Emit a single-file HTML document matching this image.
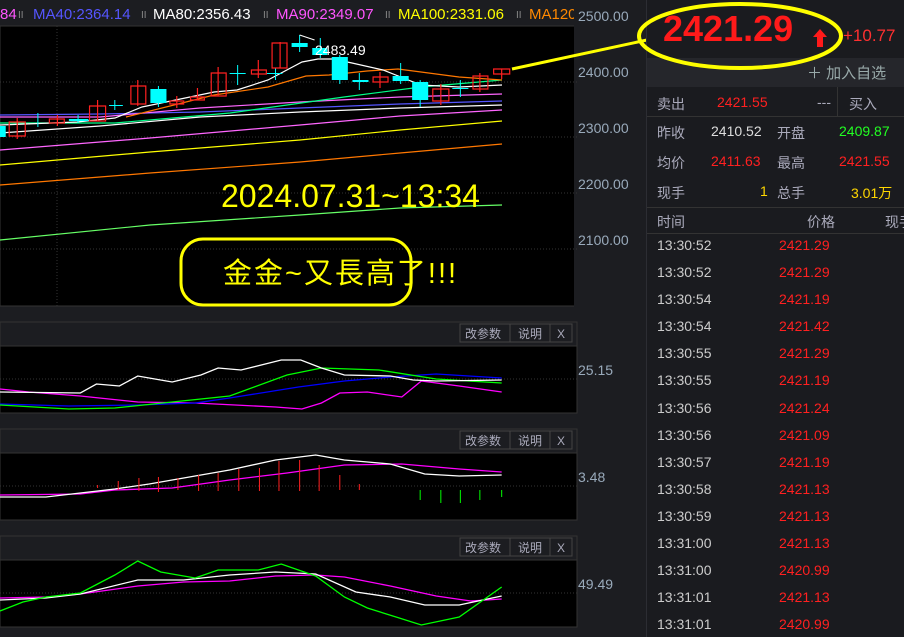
<!DOCTYPE html><html><head><meta charset="utf-8"><style>
body{margin:0;width:904px;height:637px;overflow:hidden;background:#1c1d21;font-family:"Liberation Sans","Noto Sans CJK SC",sans-serif;position:relative}
.a{position:absolute;white-space:nowrap}
.rp{left:646px;top:0;width:258px;height:637px;background:#1a1b1f;border-left:1px solid #2c2d33;overflow:hidden}
.t{font-size:14px;color:#aab}
.s *{vector-effect:non-scaling-stroke}
</style></head><body>
<svg class="a" style="left:0;top:0" width="646" height="637" font-family="Liberation Sans,Noto Sans CJK SC,sans-serif">
<rect x="0" y="0" width="646" height="637" fill="#1c1d21"/>
<rect x="0" y="26" width="577" height="280" fill="#000" stroke="#333" />
<g font-size="15">
<text x="0" y="19" fill="#ff55ff">84</text><text x="18" y="18" fill="#888" font-size="10">II</text>
<text x="33" y="19" fill="#5555ff">MA40:2364.14</text><text x="141" y="18" fill="#888" font-size="10">II</text>
<text x="153" y="19" fill="#fff">MA80:2356.43</text><text x="263" y="18" fill="#888" font-size="10">II</text>
<text x="276" y="19" fill="#ff55ff">MA90:2349.07</text><text x="385" y="18" fill="#888" font-size="10">II</text>
<text x="398" y="19" fill="#ffff00">MA100:2331.06</text><text x="516" y="18" fill="#888" font-size="10">II</text>
<text x="529" y="19" fill="#ff8800">MA120</text>
</g>
<rect x="574" y="0" width="72" height="637" fill="#1c1d21"/>
<g font-size="14" fill="#9ab">
<text x="578" y="21">2500.00</text><text x="578" y="77">2400.00</text><text x="578" y="133">2300.00</text><text x="578" y="189">2200.00</text><text x="578" y="245">2100.00</text>
<text x="578" y="375">25.15</text><text x="578" y="482">3.48</text><text x="578" y="589">49.49</text>
</g>
<g stroke="#333" stroke-dasharray="1,2"><line x1="0" y1="82" x2="577" y2="82"/><line x1="0" y1="137" x2="577" y2="137"/><line x1="0" y1="193" x2="577" y2="193"/><line x1="0" y1="249" x2="577" y2="249"/><line x1="57" y1="26" x2="57" y2="306"/></g>
<g fill="none" stroke-width="1.2">
<polyline stroke="#66ff66" points="0,240 150,225 300,215 400,208 502,205"/>
<polyline stroke="#ff7700" points="0,185 150,173 300,162 400,153 502,144"/>
<polyline stroke="#ffff00" points="0,165 150,152 300,140 400,130 502,121"/>
<polyline stroke="#ff66ff" points="0,150 150,138 300,125 400,116 502,110"/>
<polyline stroke="#fff" points="0,133 100,126 200,117 300,112 400,108 502,105"/>
<polyline stroke="#5555ff" points="0,115 100,114 200,112 300,108 400,104 502,101"/>
<polyline stroke="#ff66ff" points="0,117 100,117 200,108 300,102 400,97 502,94"/>
<polyline stroke="#00ff88" points="0,123 115,123 230,113 344,97 421,87 502,80"/>
<polyline stroke="#ff7700" points="126,117 214,95 268,87 306,76 329,75 367,71 398,69 421,72 459,77 502,80"/>
<polyline stroke="#fff" points="0,125 77,122 115,118 142,107 214,92 237,90 268,80 302,62 318,59 333,59 352,63 383,70 421,85 459,87 502,85"/>
</g>
<g class="s" transform="scale(1.148,1)">
<g stroke="#00ffff" stroke-width="1">
<line x1="33" y1="113" x2="33" y2="127"/><line x1="68" y1="115" x2="68" y2="123"/><line x1="100" y1="100" x2="100" y2="110"/><line x1="138" y1="86" x2="138" y2="107"/><line x1="207" y1="65" x2="207" y2="85"/><line x1="240" y1="68" x2="240" y2="80"/><line x1="261" y1="35" x2="261" y2="52"/><line x1="279" y1="38" x2="279" y2="58"/><line x1="296" y1="55" x2="296" y2="84"/><line x1="313" y1="73" x2="313" y2="90"/><line x1="349" y1="63" x2="349" y2="84"/><line x1="366" y1="80" x2="366" y2="107"/><line x1="401" y1="80" x2="401" y2="97"/>
</g>
<g fill="#00ffff">
<rect x="0" y="126" width="5" height="11"/><rect x="60" y="119" width="17" height="2"/><rect x="95" y="105" width="12" height="1"/><rect x="131" y="89" width="14" height="14"/><rect x="200" y="73" width="14" height="1"/><rect x="232" y="73" width="14" height="1"/><rect x="254" y="43" width="14" height="4"/><rect x="272" y="48" width="13" height="7"/><rect x="289" y="57" width="14" height="23"/><rect x="307" y="80" width="14" height="2"/><rect x="342" y="76" width="14" height="5"/><rect x="359" y="82" width="14" height="18"/><rect x="394" y="88" width="14" height="1"/>
</g>
<g stroke="#ff2020" fill="none" stroke-width="1.2">
<line x1="15" y1="118" x2="15" y2="139"/><line x1="50" y1="115" x2="50" y2="126"/><line x1="85" y1="100" x2="85" y2="121"/><line x1="120" y1="80" x2="120" y2="106"/><line x1="154" y1="96" x2="154" y2="108"/><line x1="172" y1="88" x2="172" y2="100"/><line x1="190" y1="67" x2="190" y2="96"/><line x1="225" y1="60" x2="225" y2="78"/><line x1="244" y1="42" x2="244" y2="68"/><line x1="331" y1="72" x2="331" y2="88"/><line x1="384" y1="84" x2="384" y2="105"/><line x1="418" y1="73" x2="418" y2="92"/><line x1="437" y1="69" x2="437" y2="79"/>
<rect x="8" y="122" width="14" height="14"/><rect x="43" y="119" width="13" height="4"/><rect x="78" y="106" width="14" height="15"/><rect x="114" y="86" width="13" height="18"/><rect x="148" y="101" width="12" height="3"/><rect x="166" y="97" width="12" height="3"/><rect x="184" y="73" width="13" height="23"/><rect x="219" y="70" width="13" height="4"/><rect x="237" y="43" width="13" height="25"/><rect x="325" y="77" width="13" height="5"/><rect x="377" y="89" width="14" height="12"/><rect x="412" y="76" width="13" height="13"/><rect x="430" y="69" width="14" height="5"/>
</g>
<polyline points="261,35 274,40" stroke="#fff" fill="none"/>
</g>
<text x="315" y="55" fill="#fff" font-size="14">2483.49</text>
<line x1="512" y1="69" x2="647" y2="40" stroke="#ffff00" stroke-width="3"/>
<text x="221" y="207" fill="#ffff00" font-size="32">2024.07.31~13:34</text>
<rect x="181" y="239" width="230" height="66" rx="22" fill="none" stroke="#ffff00" stroke-width="3"/>
<text x="223" y="283" fill="#ffff00" font-size="29" letter-spacing="2">金金~又長高了!!!</text>
<g>
<rect x="0" y="322" width="577" height="24" fill="#1c1d21" stroke="#333"/><rect x="0" y="346" width="577" height="67" fill="#000" stroke="#333"/>
<rect x="0" y="429" width="577" height="24" fill="#1c1d21" stroke="#333"/><rect x="0" y="453" width="577" height="67" fill="#000" stroke="#333"/>
<rect x="0" y="536" width="577" height="24" fill="#1c1d21" stroke="#333"/><rect x="0" y="560" width="577" height="67" fill="#000" stroke="#333"/>
</g>
<g font-size="12" fill="#aab">
<g><rect x="460" y="324" width="50" height="18" fill="#1c1d21" stroke="#444"/><rect x="510" y="324" width="40" height="18" fill="#1c1d21" stroke="#444"/><rect x="550" y="324" width="22" height="18" fill="#1c1d21" stroke="#444"/><text x="465" y="338">改参数</text><text x="518" y="338">说明</text><text x="557" y="338">X</text></g>
<g transform="translate(0,107)"><rect x="460" y="324" width="50" height="18" fill="#1c1d21" stroke="#444"/><rect x="510" y="324" width="40" height="18" fill="#1c1d21" stroke="#444"/><rect x="550" y="324" width="22" height="18" fill="#1c1d21" stroke="#444"/><text x="465" y="338">改参数</text><text x="518" y="338">说明</text><text x="557" y="338">X</text></g>
<g transform="translate(0,214)"><rect x="460" y="324" width="50" height="18" fill="#1c1d21" stroke="#444"/><rect x="510" y="324" width="40" height="18" fill="#1c1d21" stroke="#444"/><rect x="550" y="324" width="22" height="18" fill="#1c1d21" stroke="#444"/><text x="465" y="338">改参数</text><text x="518" y="338">说明</text><text x="557" y="338">X</text></g>
</g>
<g stroke="#333" stroke-dasharray="1,2"><line x1="0" y1="379" x2="577" y2="379"/><line x1="0" y1="486" x2="577" y2="486"/><line x1="0" y1="593" x2="577" y2="593"/></g>
<g class="s" transform="scale(1.148,1)">
<g fill="none" stroke-width="1.3">
<polyline stroke="#ff00ff" points="0,389 25,392 70,396 120,402 170,403 240,407 263,409 280,403 296,393 320,392 350,397 367,381 400,386 437,392"/>
<polyline stroke="#00f" points="0,404 60,406 120,405 170,403 200,398 260,387 300,381 340,377 380,374 437,378"/>
<polyline stroke="#00ff00" points="0,405 60,409 100,408 150,402 200,396 250,375 280,368 330,370 380,379 437,383"/>
<polyline stroke="#fff" points="0,392 70,393 84,384 104,386 120,376 150,382 175,375 190,368 210,370 245,360 262,360 280,368 300,375 340,376 360,380 380,381 437,380"/>
<polyline stroke="#ff00ff" points="0,495 70,494 100,490 150,488 200,480 250,473 300,465 350,464 400,469 437,472"/>
<polyline stroke="#fff" points="0,497 40,497 100,489 130,484 160,478 200,470 240,460 275,455 300,460 340,464 370,474 400,476 437,475"/>
<polyline stroke="#ff00ff" points="0,598 40,597 70,594 120,586 160,582 200,581 240,576 275,575 300,577 340,586 380,596 410,601 437,599"/>
<polyline stroke="#fff" points="0,600 40,598 70,594 120,580 160,580 200,575 240,572 275,574 310,592 340,597 370,605 400,605 437,596"/>
<polyline stroke="#00ff00" points="0,611 20,602 40,597 70,593 100,575 120,561 140,572 170,578 190,570 225,570 245,564 275,576 300,597 320,608 345,617 367,625 400,617 437,587"/>
</g>
<g stroke="#ff2020"><line x1="85" y1="485" x2="85" y2="488"/><line x1="103" y1="481" x2="103" y2="490"/><line x1="121" y1="478" x2="121" y2="491"/><line x1="138" y1="477" x2="138" y2="492"/><line x1="155" y1="478" x2="155" y2="490"/><line x1="173" y1="475" x2="173" y2="491"/><line x1="190" y1="473" x2="190" y2="491"/><line x1="208" y1="469" x2="208" y2="491"/><line x1="226" y1="468" x2="226" y2="491"/><line x1="243" y1="461" x2="243" y2="491"/><line x1="261" y1="460" x2="261" y2="491"/><line x1="278" y1="465" x2="278" y2="491"/><line x1="296" y1="475" x2="296" y2="490"/><line x1="313" y1="484" x2="313" y2="490"/></g>
<g stroke="#00ff00"><line x1="366" y1="490" x2="366" y2="500"/><line x1="384" y1="490" x2="384" y2="503"/><line x1="401" y1="490" x2="401" y2="503"/><line x1="418" y1="490" x2="418" y2="500"/><line x1="437" y1="490" x2="437" y2="497"/></g>
</g>
</svg>
<div class="a rp">
<div class="a" style="left:16px;top:8px;font-size:36px;font-weight:bold;color:#ff1a1a">2421.29</div>
<svg class="a" style="left:166px;top:29px" width="14" height="18"><path d="M7 0 L14 8 L10 8 L10 18 L4 18 L4 8 L0 8 Z" fill="#ff1a1a"/></svg>
<div class="a" style="left:196px;top:26px;font-size:17px;color:#ff3030">+10.77</div>
<div class="a" style="left:0;top:58px;width:258px;height:29px;background:#25262b"></div>
<div class="a" style="left:160px;top:62px;font-size:15px;color:#9aa">＋ 加入自选</div>
<div class="a" style="left:0;top:87px;width:258px;height:29px;border-bottom:1px solid #333"></div>
<div class="a" style="left:190px;top:87px;width:1px;height:29px;background:#333"></div>
<div class="a t" style="left:10px;top:94px">卖出</div><div class="a" style="left:70px;top:94px;font-size:14px;color:#ff2020">2421.55</div><div class="a t" style="left:170px;top:94px">---</div><div class="a t" style="left:202px;top:94px">买入</div>
<div class="a t" style="left:10px;top:123px">昨收</div><div class="a" style="left:64px;top:123px;font-size:14px;color:#ddd">2410.52</div><div class="a t" style="left:130px;top:123px">开盘</div><div class="a" style="left:192px;top:123px;font-size:14px;color:#22ff22">2409.87</div>
<div class="a t" style="left:10px;top:153px">均价</div><div class="a" style="left:64px;top:153px;font-size:14px;color:#ff2020">2411.63</div><div class="a t" style="left:130px;top:153px">最高</div><div class="a" style="left:192px;top:153px;font-size:14px;color:#ff2020">2421.55</div>
<div class="a t" style="left:10px;top:183px">现手</div><div class="a" style="left:113px;top:183px;font-size:14px;color:#ffd700">1</div><div class="a t" style="left:130px;top:183px">总手</div><div class="a" style="left:204px;top:183px;font-size:14px;color:#ffd700">3.01万</div>
<div class="a" style="left:0;top:207px;width:258px;height:25px;border-top:1px solid #333;border-bottom:1px solid #333"></div>
<div class="a t" style="left:10px;top:212px">时间</div><div class="a t" style="left:160px;top:212px">价格</div><div class="a t" style="left:238px;top:212px">现手</div>
<div class="a" style="left:10px;top:232px;font-size:14px;line-height:27.1px;color:#ccc">13:30:52<br>13:30:52<br>13:30:54<br>13:30:54<br>13:30:55<br>13:30:55<br>13:30:56<br>13:30:56<br>13:30:57<br>13:30:58<br>13:30:59<br>13:31:00<br>13:31:00<br>13:31:01<br>13:31:01</div>
<div class="a" style="left:132px;top:232px;font-size:14px;line-height:27.1px;color:#ff2020">2421.29<br>2421.29<br>2421.19<br>2421.42<br>2421.29<br>2421.19<br>2421.24<br>2421.09<br>2421.19<br>2421.13<br>2421.13<br>2421.13<br>2420.99<br>2421.13<br>2420.99</div>
</div>
<svg class="a" style="left:0;top:0" width="904" height="80"><ellipse cx="740" cy="36" rx="101" ry="32" fill="none" stroke="#ffff00" stroke-width="4"/></svg>
</body></html>
